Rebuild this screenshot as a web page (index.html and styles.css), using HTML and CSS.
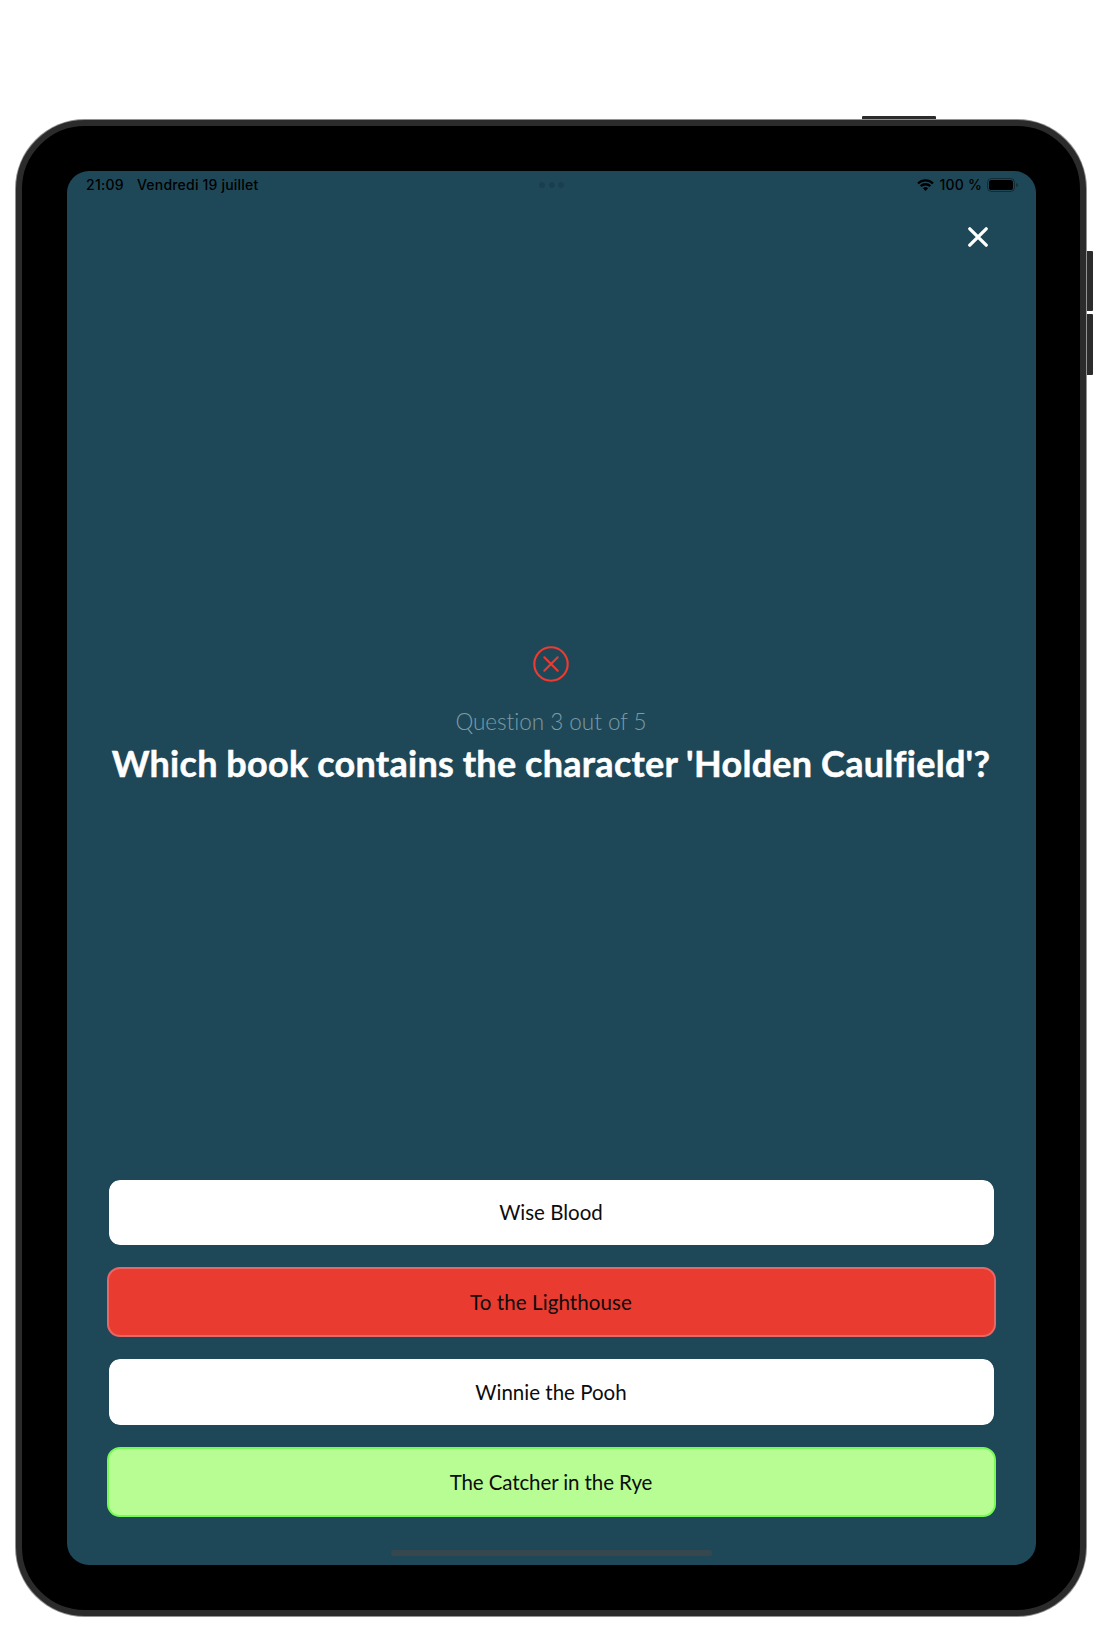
FILE: index.html
```html
<!DOCTYPE html>
<html lang="en">
<head>
<meta charset="utf-8">
<title>Book quiz</title>
<link rel="stylesheet" href="styles.css">
</head>
<body>
<div class="device">
  <span class="key key-power"></span>
  <span class="key key-up"></span>
  <span class="key key-down"></span>
  <div class="bezel">
    <main class="screen">
      <header class="status">
        <div class="status-left"><span class="time">21:09</span><span class="date">Vendredi 19 juillet</span></div>
        <div class="dots"><i></i><i></i><i></i></div>
        <div class="status-right">
          <svg class="wifi" viewBox="0 0 17 12"><g fill="none" stroke="#000" stroke-width="2.3"><path d="M1 4.5a10.7 10.7 0 0 1 15 0"/><path d="M3.7 7.2a6.9 6.9 0 0 1 9.6 0"/></g><path d="M5.9 9.3a3.8 3.8 0 0 1 5.2 0L8.5 12z"/></svg>
          <span class="percent">100 %</span>
          <svg class="battery" viewBox="0 0 32 14"><rect x=".5" y=".5" width="27" height="13" rx="4" fill="none" stroke="#000" stroke-opacity=".4"/><rect x="2" y="2" width="24" height="10" rx="2.6"/><path d="M29.3 5v4q1.5-.5 1.5-2t-1.500-2z" fill-opacity=".45"/></svg>
        </div>
      </header>
      <button class="close" aria-label="Close"><svg viewBox="0 0 20 20"><path d="M1.800 1.800l16.400 16.400M18.200 1.800L1.800 18.200" fill="none" stroke="#fff" stroke-width="3.300" stroke-linecap="round"/></svg></button>
      <section class="question">
        <svg class="wrong" viewBox="0 0 36 36"><g fill="none" stroke="#f0392f" stroke-width="2.1" stroke-linecap="round"><circle cx="18" cy="18" r="16.700"/><path d="M11.300 11.300l13.400 13.400M24.700 11.300L11.300 24.700"/></g></svg>
        <p class="progress">Question 3 out of 5</p>
        <h1 class="title">Which book contains the character 'Holden Caulfield'?</h1>
      </section>
      <div class="answers">
        <button class="answer">Wise Blood</button>
        <button class="answer answer-wrong">To the Lighthouse</button>
        <button class="answer">Winnie the Pooh</button>
        <button class="answer answer-right">The Catcher in the Rye</button>
      </div>
      <div class="home"></div>
    </main>
  </div>
</div>
</body>
</html>
```
FILE: styles.css
```css
* { box-sizing: border-box; }
body { margin: 0; height: 1630px; padding: 119px 15px 0; background: #fff; overflow: hidden; }
.device { position: relative; width: 1072px; height: 1498px; padding: 1px; border-radius: 70px; background: #929292; }
.bezel { height: 100%; padding: 45px; border: 6px solid #2b2b2b; border-radius: 69px; background: #000; }
.key { position: absolute; background: #2b2b2b; }
.key-power { left: 847px; top: -3px; width: 74px; height: 3px; border-radius: 1px 1px 0 0; }
.key-up, .key-down { left: 1072px; width: 5.5px; height: 60px; border-radius: 0 1px 1px 0; }
.key-up { top: 132px; }
.key-down { top: 195px; height: 61px; }
.screen { display: flex; flex-direction: column; width: 969px; height: 1394px; padding: 0 40px; border-radius: 22px; background: #1e4858; font-family: Lato, sans-serif; }
.status { display: flex; justify-content: space-between; align-items: center; height: 28px; margin: 0 -21px; font: 500 14px/28px Inter, sans-serif; color: #000; }
.status-left, .status-right { display: flex; align-items: center; width: 200px; white-space: nowrap; }
.status-right { justify-content: flex-end; position: relative; left: 2px; }
.time { width: 51px; letter-spacing: .25px; }
.date { letter-spacing: .2px; }
.percent { letter-spacing: .2px; }
.dots { display: flex; gap: 3.5px; }
.dots i { width: 6px; height: 6px; border-radius: 50%; background: #193f4e; }
.wifi { width: 17px; height: 12px; margin-right: 5px; }
.battery { width: 32px; height: 14px; margin-left: 5px; }
.close { align-self: flex-end; width: 20px; height: 20px; margin: 28px 8px 0 0; padding: 0; border: 0; background: none; }
.close svg { display: block; }
.question { display: flex; flex-direction: column; align-items: center; margin: 399px 1px 0 0; white-space: nowrap; }
.wrong { width: 36px; height: 36px; }
.progress { margin: 26px 0 0; font-size: 22.5px; line-height: 28px; font-weight: 300; color: #7c9ba6; letter-spacing: -.03px; }
.title { margin: 5px 0 0; font-size: 36px; line-height: 44px; font-weight: 700; letter-spacing: .28px; word-spacing: -.4px; color: #fff; -webkit-text-stroke: .5px #fff; }
.answers { display: flex; flex-direction: column; gap: 20.2px; margin-top: auto; }
.answer { height: 69.6px; padding: 0 1px 0 0; border: 2.5px solid #1e4858; border-radius: 13px; background: #fff; background-clip: padding-box; font: 400 20.5px/24px Lato, sans-serif; color: #0c0c0c; }
.answer-wrong { border-color: #e86764; background: #ea3b31; letter-spacing: .1px; }
.answer-right { border-color: #76fb55; background: #b8fd94; letter-spacing: -.1px; }
.home { align-self: center; width: 321px; height: 6px; margin: 33.5px 0 9px; border-radius: 3px; background: #36484e; }
```
